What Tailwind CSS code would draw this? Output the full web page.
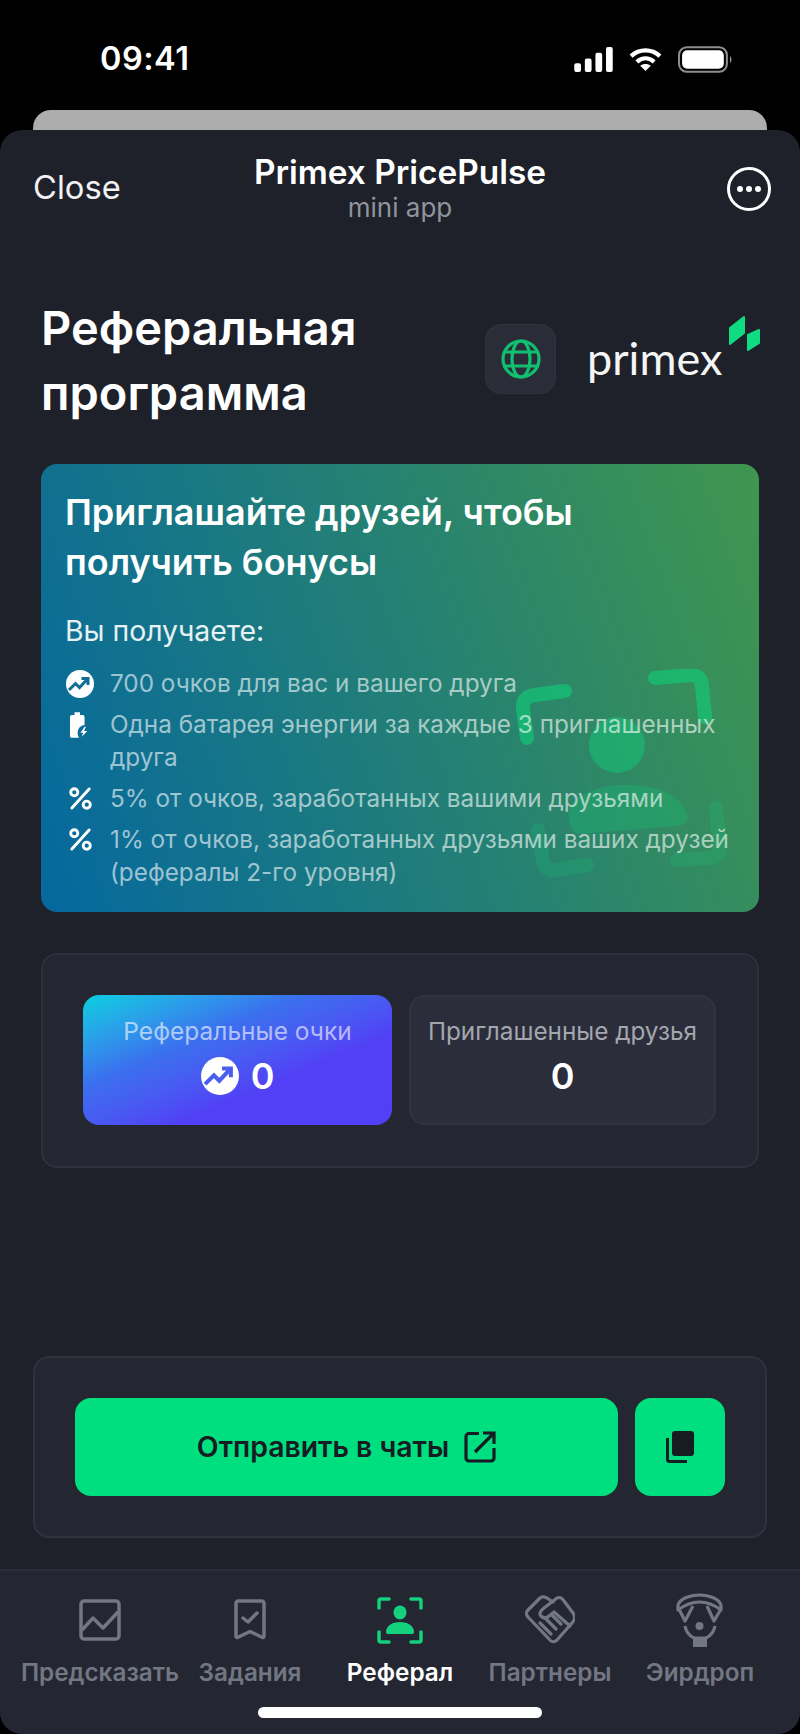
<!DOCTYPE html>
<html lang="en">
<head>
  <meta charset="UTF-8">
  <meta name="viewport" content="width=device-width, initial-scale=1.0">
  <title>Primex PricePulse</title>
  <script src="https://cdn.jsdelivr.net/npm/@tailwindcss/browser@4"></script>
</head>
<body class="bg-black text-white font-['Inter',sans-serif]">
  <div class="w-[800px] h-[1734px] flex flex-col overflow-hidden">

    <!-- Status bar -->
    <div class="h-[110px] flex-none flex justify-between items-start pl-[100px] pr-[67px] pt-[41px]">
      <span class="text-[32.500px] leading-[36px] font-semibold tracking-[0.5px]">09:41</span>
      <div class="flex items-center gap-[15px] pt-[5px]">
        <svg width="39" height="25" viewBox="0 0 40 26" fill="white"><rect x="0" y="17" width="7" height="9" rx="2"/><rect x="11" y="12" width="7" height="14" rx="2"/><rect x="22" y="6" width="7" height="20" rx="2"/><rect x="33" y="0" width="7" height="26" rx="2"/></svg>
        <svg width="35" height="25" viewBox="0 0 34 26" fill="none" stroke="white" stroke-width="4.500"><path d="M2 9.500C10.500 1.500 23.500 1.500 32 9.500"/><path d="M8 15.500C13.500 10.500 20.500 10.500 26 15.500"/><path d="M17 25L11.500 19.500C14.500 17 19.500 17 22.500 19.500Z" fill="white" stroke="none"/></svg>
        <svg width="55" height="27" viewBox="0 0 54 26" fill="none"><rect x="1" y="1" width="47" height="24" rx="7.500" stroke="#8e8e8e" stroke-width="2"/><rect x="4" y="4" width="41" height="18" rx="5" fill="white"/><path d="M51 9.500C53 10.500 53 15.500 51 16.500Z" fill="#8e8e8e"/></svg>
      </div>
    </div>

    <div class="relative flex-1 flex flex-col">
      <!-- Card behind the sheet -->
      <div class="h-[30px] mx-[33px] -mb-[10px] rounded-t-[18px] bg-[#adadad] flex-none"></div>

      <!-- Sheet -->
      <div class="relative flex-1 flex flex-col rounded-[22px] bg-[#1e2129] overflow-hidden">

        <!-- Telegram header -->
        <div class="relative h-[100px] flex-none flex justify-between items-start px-[33px] pt-[37px]">
          <span class="text-[32.700px] leading-[40px] text-[#f2f2f3]">Close</span>
          <div class="absolute left-0 right-0 top-[20px] flex flex-col items-center">
            <span class="text-[33.400px] leading-[44px] font-semibold">Primex PricePulse</span>
            <span class="text-[26px] leading-[28px] text-[#90949c]">mini app</span>
          </div>
          <svg class="mr-[-4px]" width="44" height="44" viewBox="0 0 44 44" fill="none"><circle cx="22" cy="22" r="20.500" stroke="white" stroke-width="3"/><circle cx="13" cy="22" r="3" fill="white"/><circle cx="22" cy="22" r="3" fill="white"/><circle cx="31" cy="22" r="3" fill="white"/></svg>
        </div>

        <!-- Page heading -->
        <div class="flex-none flex justify-between pl-[41px] pr-[71px] pt-[65px]">
          <h1 class="text-[47px] leading-[65px] font-semibold">Реферальная<br>программа</h1>
          <div class="flex items-start gap-[33px] pt-[29px]">
            <div class="w-[71px] h-[70px] rounded-[16px] bg-[#2a2d38] border border-[#31343f] flex items-center justify-center">
              <svg width="40" height="40" viewBox="0 0 40 40" fill="none" stroke="#10bf70" stroke-width="3.200"><circle cx="20" cy="20" r="18"/><ellipse cx="20" cy="20" rx="9" ry="18"/><path d="M4 13H36M4 27H36"/></svg>
            </div>
            <div class="relative w-[140px] h-[70px]">
              <span class="absolute -left-[2px] top-[4px] text-[45px] leading-[60px] font-['Lato',sans-serif] font-normal text-[#f4f5f5]">primex</span>
              <svg class="absolute left-[138px] -top-[9px]" width="34" height="38" viewBox="0 0 34 38" fill="#0fdc82" stroke="#0fdc82" stroke-width="2" stroke-linejoin="round"><path d="M3 13L17 2V18L3 29Z"/><path d="M21 20L32 15V28L21 35Z"/></svg>
            </div>
          </div>
        </div>

        <!-- Invite card -->
        <div class="relative mx-[41px] mt-[39px] h-[448px] flex-none rounded-[16px] overflow-hidden bg-linear-[70deg] from-[#05689f] to-[#40964e] pl-[24px] pr-[15px] pt-[23px]">
          <svg class="absolute left-[470px] top-[205px]" width="248" height="243" viewBox="0 0 248 243" fill="none" stroke="#0fd178" stroke-width="14" stroke-linecap="round" stroke-linejoin="round">
            <path d="M54 22L24 26C15 27 11 32 12 40L16 69" stroke-opacity="0.6"/>
            <path d="M144 9L180 6C187 6 191 10 191 17L194 48" stroke-opacity="0.6"/>
            <circle cx="106" cy="76" r="28" fill="#0fd178" fill-opacity="0.45" stroke="none"/>
            <path d="M58 150C54 130 80 117 112 116C146 115 170 126 176 145C178 152 174 156 166 157L70 165C62 165 59 158 58 150Z" fill="#0fd178" fill-opacity="0.25" stroke="none"/>
            <path d="M27 161L32 192C33 198 37 202 44 201L76 196" stroke-opacity="0.18"/>
            <path d="M205 139L209 176C210 184 206 188 198 189L166 191" stroke-opacity="0.18"/>
          </svg>
          <div class="relative">
            <h2 class="text-[36px] leading-[50px] font-semibold">Приглашайте друзей, чтобы<br>получить бонусы</h2>
            <p class="mt-[25px] text-[28.400px] leading-[38px] text-white/90">Вы получаете:</p>
            <ul class="mt-[17px] flex flex-col gap-[8px] text-[24.300px] leading-[33px] text-white/60">
              <li class="flex gap-[15px]">
                <span class="flex-none w-[30px] h-[33px] flex items-center justify-center">
                  <svg width="28" height="28" viewBox="0 0 28 28"><circle cx="14" cy="14" r="14" fill="white"/><path d="M3 20L9.500 13.500L13.500 17.500L21 9.500M15.500 8.500H22V15" fill="none" stroke="#0f6f93" stroke-width="3"/></svg>
                </span>
                <span>700 очков для вас и вашего друга</span>
              </li>
              <li class="flex gap-[15px]">
                <span class="flex-none w-[30px] h-[33px] flex items-center justify-center">
                  <svg width="20" height="28" viewBox="0 0 22 28" fill="white"><path d="M5 0H11V3H14C15 3 16 4 16 5V14C11 14.500 8 18.500 8.500 24C8.500 25 9 27 10 28H2C1 28 0 27 0 26V5C0 4 1 3 2 3H5Z"/><path d="M16 16L11.500 22.500H14.500L13 27L19 20.500H15.500L17.500 16Z"/></svg>
                </span>
                <span>Одна батарея энергии за каждые 3 приглашенных<br>друга</span>
              </li>
              <li class="flex gap-[15px]">
                <span class="flex-none w-[30px] h-[33px] flex items-center justify-center">
                  <svg width="23" height="23" viewBox="0 0 24 24" fill="none" stroke="white" stroke-width="3"><circle cx="5.500" cy="5.500" r="3.700"/><circle cx="18.500" cy="18.500" r="3.700"/><path d="M21 2L3 22" stroke-linecap="round"/></svg>
                </span>
                <span>5% от очков, заработанных вашими друзьями</span>
              </li>
              <li class="flex gap-[15px]">
                <span class="flex-none w-[30px] h-[33px] flex items-center justify-center">
                  <svg width="23" height="23" viewBox="0 0 24 24" fill="none" stroke="white" stroke-width="3"><circle cx="5.500" cy="5.500" r="3.700"/><circle cx="18.500" cy="18.500" r="3.700"/><path d="M21 2L3 22" stroke-linecap="round"/></svg>
                </span>
                <span>1% от очков, заработанных друзьями ваших друзей<br>(рефералы 2-го уровня)</span>
              </li>
            </ul>
          </div>
        </div>

        <!-- Stats -->
        <div class="mx-[41px] mt-[41px] h-[215px] flex-none rounded-[16px] bg-[#242731] border-2 border-[#2f323c] pl-[40px] pb-[2px] flex items-center gap-[17px]">
          <div class="w-[309px] h-[130px] rounded-[16px] bg-linear-to-br from-[#05cfdf] via-[#3a70ee] via-35% to-[#5140f5] to-65% flex flex-col items-center pt-[19px]">
            <span class="text-[24.500px] leading-[34px] text-white/60">Реферальные очки</span>
            <div class="flex items-center gap-[12px] mt-[5px]">
              <svg width="38" height="38" viewBox="0 0 28 28"><circle cx="14" cy="14" r="14" fill="white"/><path d="M3 20L9.500 13.500L13.500 17.500L21 9.500M15.500 8.500H22V15" fill="none" stroke="#4a5ef0" stroke-width="3"/></svg>
              <span class="text-[36px] leading-[46px] font-semibold">0</span>
            </div>
          </div>
          <div class="w-[307px] h-[130px] rounded-[16px] bg-[#2b2e3a] border-2 border-[#31343f] flex flex-col items-center pt-[17px]">
            <span class="text-[24.300px] leading-[34px] text-[#a3a6af] whitespace-nowrap">Приглашенные друзья</span>
            <span class="text-[36px] leading-[46px] mt-[5px] font-semibold">0</span>
          </div>
        </div>

        <!-- Share actions -->
        <div class="mx-[33px] mt-[188px] h-[182px] flex-none rounded-[16px] bg-[#242731] border-2 border-[#30333e] pl-[40px] flex items-center gap-[17px]">
          <button class="w-[543px] h-[98px] rounded-[16px] bg-[#00df80] flex items-center justify-center gap-[15px] text-[28.400px] font-semibold text-[#171b22]">
            <span>Отправить в чаты</span>
            <svg width="32" height="32" viewBox="0 0 32 32" fill="none" stroke="#171b22" stroke-width="3.200"><path d="M15 2.500H5C3.500 2.500 2 4 2 5.500V27C2 28.500 3.500 30 5 30H27C28.500 30 30 28.500 30 27V17M11 21L29 3M19 2H30V13"/></svg>
          </button>
          <button class="w-[90px] h-[98px] rounded-[16px] bg-[#00df80] flex items-center justify-center">
            <svg width="28" height="32" viewBox="0 0 28 32" fill="#171b22"><rect x="6" y="0" width="22" height="25" rx="3"/><path d="M0 7H3V28C3 28.500 3.500 29 4 29H21V32H3C1.500 32 0 30.500 0 29Z"/></svg>
          </button>
        </div>

        <!-- Tab bar -->
        <nav class="relative mt-[31px] flex-1 bg-[#242731] border-t-2 border-[#2b2e38] grid grid-cols-5 px-[25px] pt-[22px]">
          <a class="flex flex-col items-center text-[24.300px] leading-[34px] font-semibold text-[#737683] whitespace-nowrap">
            <svg class="h-[56px] mb-[6px]" width="42" height="56" viewBox="0 0 42 56" fill="none" stroke="#737683" stroke-width="3.500" stroke-linejoin="round"><rect x="2" y="8" width="38" height="38" rx="3"/><path d="M3 37L14 25L24 35L39 19"/></svg>
            <span>Предсказать</span>
          </a>
          <a class="flex flex-col items-center text-[24.300px] leading-[34px] font-semibold text-[#737683] whitespace-nowrap">
            <svg class="h-[56px] mb-[6px]" width="32" height="56" viewBox="0 0 32 56" fill="none" stroke="#737683" stroke-width="3.500" stroke-linejoin="round" stroke-linecap="round"><path d="M4 8H28C29 8 30 9 30 10V43C30 44.500 29 45 27.500 44L16 38.500L4.500 44C3 45 2 44.500 2 43V10C2 9 3 8 4 8Z"/><path d="M9 25L14 29L23 20"/></svg>
            <span>Задания</span>
          </a>
          <a class="flex flex-col items-center text-[24.300px] leading-[34px] font-semibold text-white whitespace-nowrap">
            <svg class="h-[56px] mb-[6px]" width="46" height="56" viewBox="0 0 46 56" fill="none" stroke="#13d17c" stroke-width="3.500" stroke-linecap="round" stroke-linejoin="round"><path d="M12 6H4C2.500 6 2 7 2 8V15"/><path d="M34 6H42C43.500 6 44 7 44 8V15"/><path d="M2 39V47C2 48.500 3 49 4 49H12"/><path d="M44 39V47C44 48.500 43 49 42 49H34"/><ellipse cx="23" cy="19.500" rx="6.500" ry="7" fill="#13d17c" stroke="none"/><path d="M9 39C9 33 15 29 23 29C31 29 37 33 37 39C37 40.500 36 41 35 41H11C10 41 9 40.500 9 39Z" fill="#13d17c" stroke="none"/></svg>
            <span>Реферал</span>
          </a>
          <a class="flex flex-col items-center text-[24.300px] leading-[34px] font-semibold text-[#737683] whitespace-nowrap">
            <svg class="h-[56px] mb-[6px]" width="50" height="56" viewBox="0 0 50 56" fill="none" stroke="#737683" stroke-width="3.200" stroke-linejoin="round" stroke-linecap="round"><path d="M28 9L22 5C19 3.500 17 3.500 15 5L3 17C1 19 1 22 3 24L24 46C26 49.500 30 49.500 32 47L47 30C50 27 50 23 48 20L39 8C37 4.500 34 4 32 5L19 15C15 18 14 21 16 23C19 26 22 25 24 23L29 19L45 33"/><path d="M15 30L26 41M21 26L31 36M27 22L36 31"/></svg>
            <span>Партнеры</span>
          </a>
          <a class="flex flex-col items-center text-[24.300px] leading-[34px] font-semibold text-[#737683] whitespace-nowrap">
            <svg class="h-[56px] mb-[6px]" width="50" height="56" viewBox="0 0 50 56" fill="none" stroke="#737683" stroke-width="3.200" stroke-linejoin="round"><path d="M3 17V12C5 6 14 2 24.500 2C35 2 44 6 46 12V17C38 11 31 9 24.500 9C18 9 11 11 3 17Z"/><path d="M4 16L10 28L18 13M46 16L39 28L32 13"/><path d="M10 33C11 39 15 43 19 45H31C35 43 39 39 40 33"/><circle cx="24.500" cy="33" r="4" fill="#737683" stroke="none"/><rect x="18" y="45" width="14" height="9" fill="#737683" stroke="none"/></svg>
            <span>Эирдроп</span>
          </a>
          <div class="absolute left-[258px] bottom-[16px] w-[284px] h-[11px] rounded-full bg-white"></div>
        </nav>
      </div>
    </div>
  </div>
</body>
</html>
